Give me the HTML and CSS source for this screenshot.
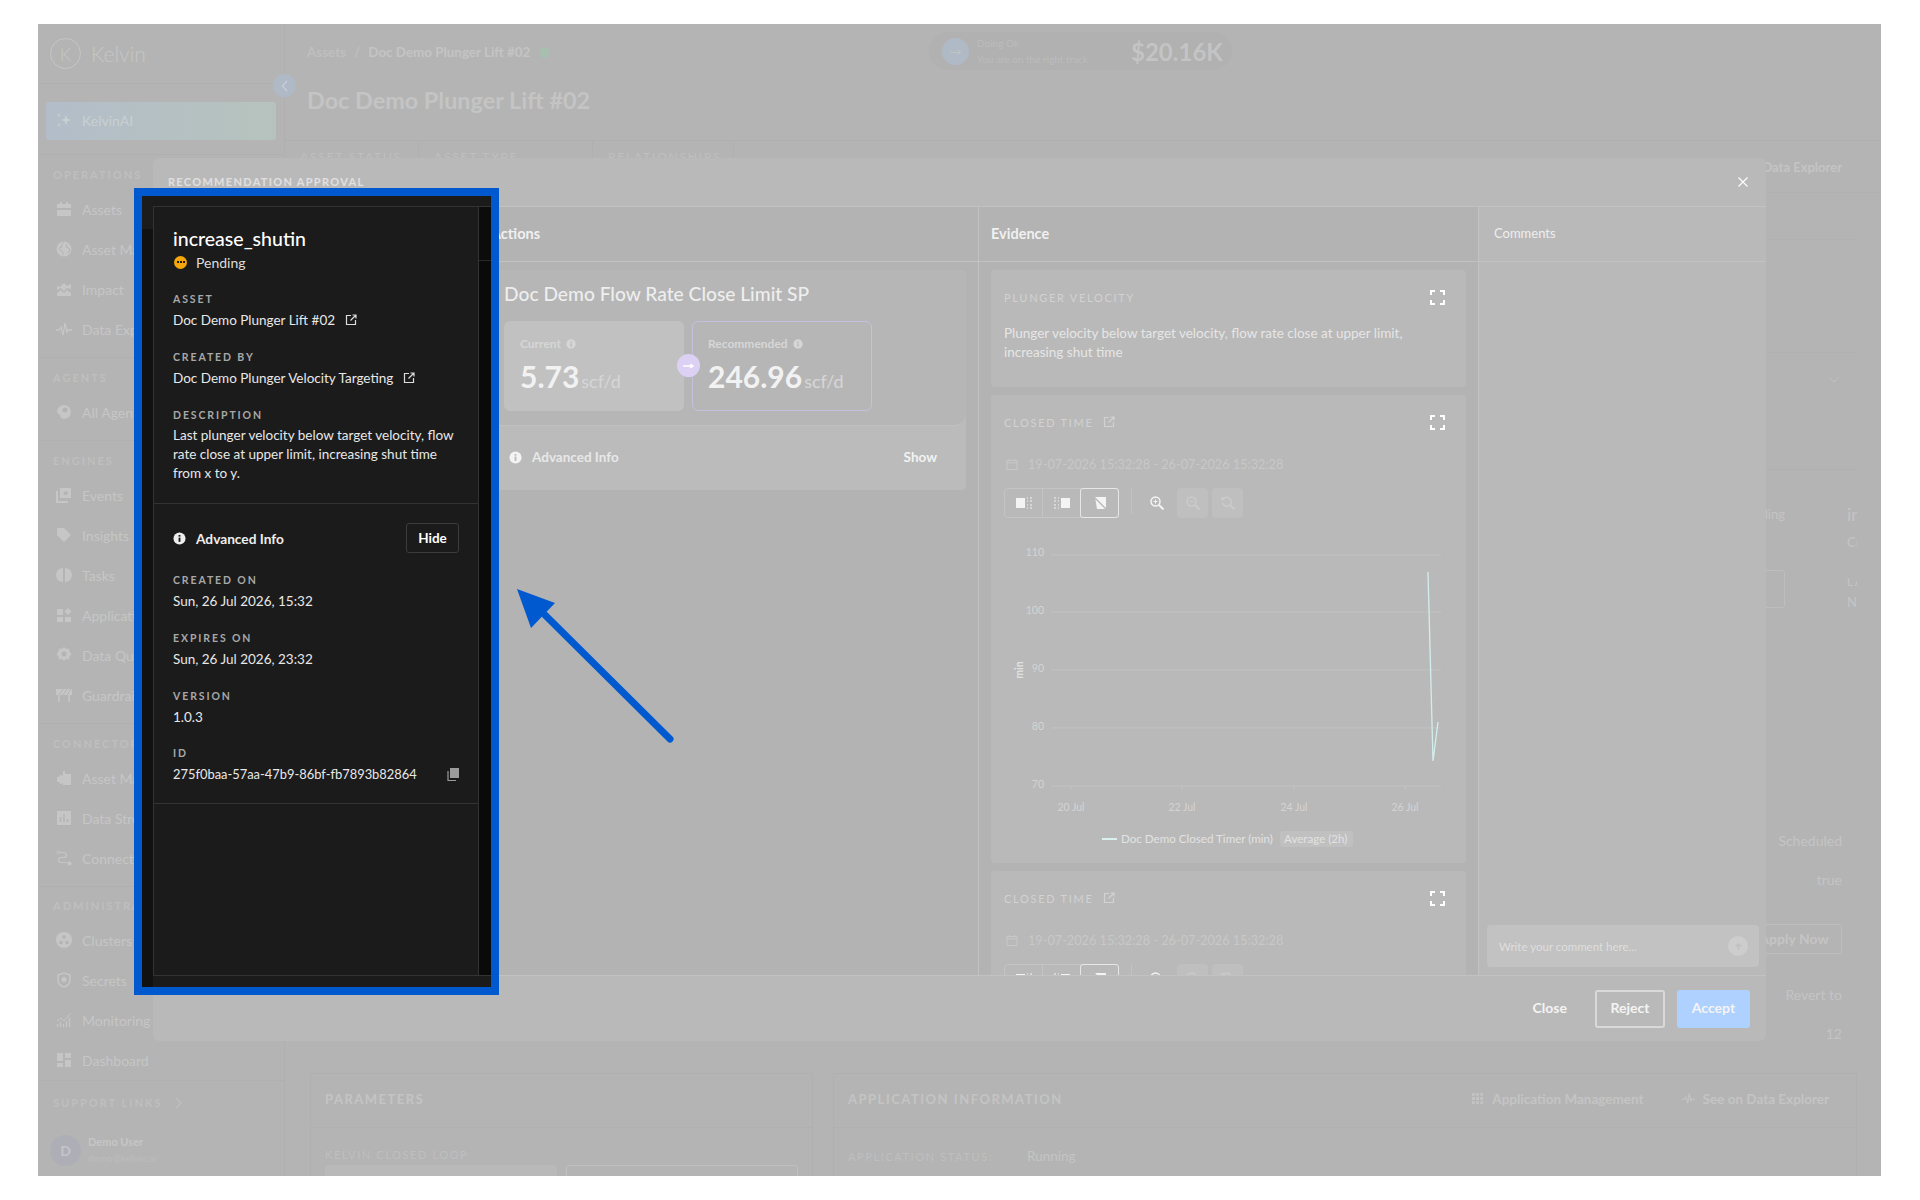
FILE: index.html
```html
<!DOCTYPE html>
<html lang="en">

<head>
    <meta charset="UTF-8">
    <title>Recommendation Approval</title>
    <link rel="stylesheet" href="styles.css">
</head>

<body>
    <svg class="sprite" width="0" height="0">
        <symbol id="external" viewBox="0 0 12 12"><path d="M6 1.5H1.5v9h9V6M5.5 6.5l5-5M7.5 1h3.5v3.5" fill="none" stroke="currentColor" stroke-width="1.2"/></symbol>
        <symbol id="info" viewBox="0 0 14 14"><circle cx="7" cy="7" r="6.5" fill="currentColor"/><rect x="6" y="6" width="2" height="4.6" fill="var(--infoDot)"/><rect x="6" y="3.2" width="2" height="1.8" fill="var(--infoDot)"/></symbol>
        <symbol id="expand" viewBox="0 0 15 15"><path d="M1 5V1h4M10 1h4v4M14 10v4h-4M5 14H1v-4" fill="none" stroke="currentColor" stroke-width="2"/></symbol>
        <symbol id="calendar" viewBox="0 0 12 12"><path d="M1 2.5h10v9H1zM1 4.8h10M3.5 1v2M8.5 1v2" fill="none" stroke="currentColor"/></symbol>
        <symbol id="selLeft" viewBox="0 0 16 12"><path d="M0 1h9v10H0z" fill="currentColor"/><path d="M11 1h1M14 1h2M11 4h1M14 4h2M11 8h1M14 8h2M11 11h1M14 11h2" stroke="currentColor"/></symbol>
        <symbol id="selRight" viewBox="0 0 16 12"><path d="M7 1h9v10H7z" fill="currentColor"/><path d="M0 1h2M4 1h1M0 4h2M4 4h1M0 8h2M4 8h1M0 11h2M4 11h1" stroke="currentColor"/></symbol>
        <symbol id="selNone" viewBox="0 0 12 12"><path d="M1 0h11v12H3z" fill="currentColor"/><path d="M0 0l12 12" stroke="#b9b9b9" stroke-width="1.4"/></symbol>
        <symbol id="zoomIn" viewBox="0 0 14 14"><circle cx="5.5" cy="5.5" r="4.5" fill="none" stroke="currentColor" stroke-width="1.5"/><path d="M9 9l4.5 4.5" stroke="currentColor" stroke-width="2"/><path d="M3.5 5.5h4M5.5 3.5v4" stroke="currentColor"/></symbol>
        <symbol id="zoomOut" viewBox="0 0 14 14"><circle cx="5.5" cy="5.5" r="4.5" fill="none" stroke="currentColor" stroke-width="1.5"/><path d="M9 9l4.5 4.5" stroke="currentColor" stroke-width="2"/><path d="M3.5 5.5h4" stroke="currentColor"/></symbol>
        <symbol id="zoomReset" viewBox="0 0 14 14"><path d="M2 3.5A4.5 4.5 0 1 1 1.5 7" fill="none" stroke="currentColor" stroke-width="1.5"/><path d="M0 1l4 .5L1 5z" fill="currentColor"/><path d="M9 9l4.5 4.5" stroke="currentColor" stroke-width="2"/></symbol>
        <symbol id="assets" viewBox="0 0 16 16"><path d="M4 1h2v2h4V1h2v2h3v4H1V3h3zM1 9h14v6H1z" fill="currentColor"/></symbol>
        <symbol id="globe" viewBox="0 0 16 16"><circle cx="8" cy="8" r="7.5" fill="currentColor"/><path d="M8 1L5 4l1 2-3 1 2 3 2 1v3M11 3l-1 3 3 1 1 3-3 2" fill="none" stroke="#b4b4b4"/></symbol>
        <symbol id="impact" viewBox="0 0 16 16"><path d="M1 15v-3l4-3 3 3 3-3 4 3v3zM1 9V5l3 1 4-4 3 3 4-2v5l-4-1-3 3-3-3z" fill="currentColor"/></symbol>
        <symbol id="pulse" viewBox="0 0 16 16"><path d="M0 9h3l2-3 2 8 2-12 2 9 1-2h4" fill="none" stroke="currentColor" stroke-width="1.3"/></symbol>
        <symbol id="agents" viewBox="0 0 16 16"><path d="M8 1a7 7 0 0 1 7 7 7 7 0 0 1-7 7l-3-1-1-3A7 7 0 0 1 1 8a7 7 0 0 1 7-7z" fill="currentColor"/><circle cx="9" cy="6" r="2.5" fill="#b4b4b4"/></symbol>
        <symbol id="events" viewBox="0 0 16 16"><path d="M4 1h11v10H4z" fill="currentColor"/><path d="M1 4v11h11" fill="none" stroke="currentColor" stroke-width="2"/><path d="M9.5 3l1 2h2L11 6.500l.5 2-2-1-2 1 .5-2L7 5h2z" fill="#b4b4b4"/></symbol>
        <symbol id="tag" viewBox="0 0 16 16"><path d="M1 1h7l7 7-7 7-7-7z" fill="currentColor"/></symbol>
        <symbol id="tasks" viewBox="0 0 16 16"><path d="M7 1v14a7 7 0 0 1 0-14zM9 1a7 7 0 0 1 0 14z" fill="currentColor"/></symbol>
        <symbol id="apps" viewBox="0 0 16 16"><path d="M1 2h6v6H1zM1 10h6v5H1zM9 10h6v5H9zM12 1l3.500 3.500L12 8 8.500 4.500z" fill="currentColor"/></symbol>
        <symbol id="quality" viewBox="0 0 16 16"><path d="M8 0l2 2 3-.500.500 3 2 2.500-2 2.500-.500 3-3-.500-2 2-2-2-3 .500-.500-3L.500 7l2-2.500.500-3 3 .500z" fill="currentColor"/><circle cx="8" cy="7" r="2.500" fill="#b4b4b4"/></symbol>
        <symbol id="guard" viewBox="0 0 16 16"><path d="M0 2h16v6H0z" fill="currentColor"/><path d="M3 8L7 2M7 8l4-6M11 8l4-6" stroke="#b4b4b4"/><path d="M3 8v7M13 8v7" stroke="currentColor" stroke-width="1.600"/></symbol>
        <symbol id="puzzle" viewBox="0 0 16 16"><path d="M7 1h2v3h6v11H7v-3a2 2 0 0 1-4 0H1V7h2a2 2 0 0 1 4 0z" fill="currentColor"/></symbol>
        <symbol id="bars" viewBox="0 0 16 16"><path d="M1 1h14v14H1z" fill="currentColor"/><path d="M4.500 12V7M8 12V4M11.500 12V9" stroke="#b4b4b4" stroke-width="1.500"/></symbol>
        <symbol id="connect" viewBox="0 0 16 16"><circle cx="2.500" cy="2.500" r="1.500" fill="none" stroke="currentColor"/><circle cx="13.500" cy="13.500" r="2" fill="currentColor"/><path d="M4 2.500h4a2.500 2.500 0 0 1 0 5H5a2.500 2.500 0 0 0 0 5h6.500" fill="none" stroke="currentColor" stroke-width="1.200"/></symbol>
        <symbol id="clusters" viewBox="0 0 16 16"><circle cx="8" cy="8" r="8" fill="currentColor"/><circle cx="8" cy="5" r="1.800" fill="#b4b4b4"/><circle cx="5" cy="10.500" r="1.800" fill="#b4b4b4"/><circle cx="11" cy="10.500" r="1.800" fill="#b4b4b4"/></symbol>
        <symbol id="shield" viewBox="0 0 16 16"><path d="M8 1l6 2v5c0 3.500-3 6-6 7-3-1-6-3.500-6-7V3z" fill="none" stroke="currentColor" stroke-width="1.500"/><circle cx="8" cy="7.500" r="2.500" fill="currentColor"/></symbol>
        <symbol id="monitor" viewBox="0 0 16 16"><path d="M1 9l4-3 3 3 7-8" fill="none" stroke="currentColor"/><path d="M1.500 15v-3M4.500 15v-5M7.500 15v-3M10.500 15v-6M13.500 15V6" stroke="currentColor" stroke-width="1.300"/></symbol>
        <symbol id="dashboard" viewBox="0 0 16 16"><path d="M1 1h6v8H1zM9 1h6v5H9zM1 11h6v4H1zM9 8h6v7H9z" fill="currentColor"/></symbol>
        <symbol id="dots" viewBox="0 0 14 14"><path d="M1 1h3v3H1zM5.500 1h3v3h-3zM10 1h3v3h-3zM1 5.500h3v3H1zM5.500 5.500h3v3h-3zM10 5.500h3v3h-3zM1 10h3v3H1zM5.500 10h3v3h-3zM10 10h3v3h-3z" fill="currentColor"/></symbol>
    </svg>

    <div class="shot">
        <aside class="sidebar">
            <div class="logoRow">
                <span class="logoMark">K</span>
                <span class="logoText">Kelvin</span>
            </div>
            <div class="aiBlock">
                <div class="aiButton">
                    <svg class="navIcon" viewBox="0 0 16 16"><path d="M10 3l1.300 3.700L15 8l-3.700 1.300L10 13 8.700 9.300 5 8l3.700-1.300zM3 1l.6 1.400L5 3l-1.400.6L3 5l-.6-1.400L1 3l1.400-.6zM3 11l.6 1.400L5 13l-1.400.6L3 15l-.6-1.400L1 13l1.400-.6z" fill="currentColor"/></svg>
                    KelvinAI
                </div>
            </div>
            <section class="navSection">
                <div class="navLabel">OPERATIONS</div>
                <div class="navItem"><svg class="navIcon"><use href="#assets"/></svg>Assets</div>
                <div class="navItem"><svg class="navIcon"><use href="#globe"/></svg>Asset Map</div>
                <div class="navItem"><svg class="navIcon"><use href="#impact"/></svg>Impact</div>
                <div class="navItem"><svg class="navIcon"><use href="#pulse"/></svg>Data Explorer</div>
            </section>
            <section class="navSection">
                <div class="navLabel">AGENTS</div>
                <div class="navItem"><svg class="navIcon"><use href="#agents"/></svg>All Agents</div>
            </section>
            <section class="navSection">
                <div class="navLabel">ENGINES</div>
                <div class="navItem"><svg class="navIcon"><use href="#events"/></svg>Events</div>
                <div class="navItem"><svg class="navIcon"><use href="#tag"/></svg>Insights</div>
                <div class="navItem"><svg class="navIcon"><use href="#tasks"/></svg>Tasks</div>
                <div class="navItem"><svg class="navIcon"><use href="#apps"/></svg>Applications</div>
                <div class="navItem"><svg class="navIcon"><use href="#quality"/></svg>Data Quality</div>
                <div class="navItem"><svg class="navIcon"><use href="#guard"/></svg>Guardrails</div>
            </section>
            <section class="navSection">
                <div class="navLabel">CONNECTORS</div>
                <div class="navItem"><svg class="navIcon"><use href="#puzzle"/></svg>Asset Management</div>
                <div class="navItem"><svg class="navIcon"><use href="#bars"/></svg>Data Streams</div>
                <div class="navItem"><svg class="navIcon"><use href="#connect"/></svg>Connections</div>
            </section>
            <section class="navSection navSectionLast">
                <div class="navLabel">ADMINISTRATION</div>
                <div class="navItem"><svg class="navIcon"><use href="#clusters"/></svg>Clusters</div>
                <div class="navItem"><svg class="navIcon"><use href="#shield"/></svg>Secrets</div>
                <div class="navItem"><svg class="navIcon"><use href="#monitor"/></svg>Monitoring</div>
                <div class="navItem"><svg class="navIcon"><use href="#dashboard"/></svg>Dashboard</div>
            </section>
            <div class="supportRow">
                <div class="navLabel">SUPPORT LINKS</div>
                <svg class="supportChevron" viewBox="0 0 8 12"><path d="M2 1l5 5-5 5" fill="none" stroke="currentColor" stroke-width="1.200"/></svg>
            </div>
            <div class="userRow">
                <span class="avatar">D</span>
                <div>
                    <div class="userName">Demo User</div>
                    <div class="userMail">demo@kelvin.ai</div>
                </div>
            </div>
        </aside>
        <span class="collapseBtn">
            <svg viewBox="0 0 8 12" width="8" height="12"><path d="M6 1L1.500 6 6 11" fill="none" stroke="currentColor" stroke-width="1.200"/></svg>
        </span>

        <main class="main">
            <header class="topBar">
                <div>
                    <div class="crumbs">
                        <span class="crumbFaint">Assets</span><span class="crumbFaint crumbSlash">/</span><span>Doc Demo Plunger Lift #02</span>
                        <span class="okDot"></span>
                    </div>
                    <h1 class="pageTitle">Doc Demo Plunger Lift #02</h1>
                </div>
                <div class="statusPill">
                    <span class="statusCircle">→</span>
                    <div class="statusText">
                        <div>Doing Ok</div>
                        <div>You are on the right track</div>
                    </div>
                    <span class="statusMoney">$20.16K</span>
                </div>
            </header>
            <nav class="tabRow">
                <span class="tabCell tabStatus">ASSET STATUS</span>
                <span class="tabCell tabType">ASSET TYPE</span>
                <span class="tabCell tabRel">RELATIONSHIPS</span>
                <span class="tabLink">See on Data Explorer</span>
            </nav>
            <div class="mainBody">
                <div class="rightCol">
                    <div class="rightRow rightRowA"></div>
                    <div class="rightRow rightRowB"></div>
                    <div class="rightRow rightRowC">
                        <svg viewBox="0 0 12 8" width="12" height="8"><path d="M1 1l5 5 5-5" fill="none" stroke="currentColor"/></svg>
                    </div>
                    <div class="rightRow rightRowD">
                        <div class="statCol">
                            <div class="statName">Pending</div>
                            <div class="statBtn">Save</div>
                        </div>
                        <div class="statClip">
                            <div class="statBig">increase_shutin</div>
                            <div class="statSmall">Created</div>
                            <div class="statHead">LAST</div>
                            <div class="statVal">N/A</div>
                        </div>
                    </div>
                    <div class="rightList">
                        <div class="rightText">Scheduled</div>
                        <div class="rightText">true</div>
                        <div class="rightBtn">Apply Now</div>
                        <div class="rightText">Revert to</div>
                        <div class="rightText">12</div>
                    </div>
                </div>
            </div>
            <div class="bottomCards">
                <section class="bottomCard bottomParams">
                    <div class="bottomHead">PARAMETERS</div>
                    <div class="bottomInner">
                        <div class="bottomSmall">KELVIN CLOSED LOOP</div>
                        <div class="paramBoxes">
                            <span class="paramBox"></span>
                            <span class="paramBox paramBoxOn"></span>
                        </div>
                    </div>
                </section>
                <section class="bottomCard bottomInfo">
                    <div class="bottomHead bottomHeadWide">
                        <span>APPLICATION INFORMATION</span>
                        <span class="bottomLinks">
                            <span class="bottomLink"><svg class="linkIcon"><use href="#dots"/></svg>Application Management</span>
                            <span class="bottomLink"><svg class="linkIcon"><use href="#pulse"/></svg>See on Data Explorer</span>
                        </span>
                    </div>
                    <div class="bottomInner infoRow">
                        <span class="bottomSmall infoKey">APPLICATION STATUS:</span>
                        <span class="infoVal">Running</span>
                    </div>
                </section>
            </div>
        </main>

        <div class="modal">
            <div class="modalHead">
                <span class="modalTitle">RECOMMENDATION APPROVAL</span>
                <svg class="modalClose" viewBox="0 0 10 10"><path d="M.5.5l9 9M9.500.5l-9 9" stroke="currentColor" stroke-width="1.100"/></svg>
            </div>
            <div class="modalCols">
                <div class="modalCol colBlank"></div>
                <div class="modalCol colShade">
                    <div class="colHead colHeadStrong">Actions</div>
                    <div class="colBody">
                        <div class="actionCard">
                            <div class="actionTop">
                                <div class="actionTitle">Doc Demo Flow Rate Close Limit SP</div>
                                <div class="valueRow">
                                    <div class="valueBox valueCurrent">
                                        <div class="valueLabel">Current <svg class="tinyInfo"><use href="#info"/></svg></div>
                                        <div class="valueNum">5.73<span class="valueUnit">scf/d</span></div>
                                    </div>
                                    <div class="valueBox valueRec">
                                        <div class="valueLabel">Recommended <svg class="tinyInfo"><use href="#info"/></svg></div>
                                        <div class="valueNum">246.96<span class="valueUnit">scf/d</span></div>
                                    </div>
                                    <span class="valueArrow">
                                        <svg viewBox="0 0 12 8" width="11" height="8"><path d="M0 4h10M8 2l3 2-3 2" fill="none" stroke="currentColor" stroke-width="1.500"/></svg>
                                    </span>
                                </div>
                            </div>
                            <div class="actionInfo">
                                <span class="infoLeft"><svg class="smallInfo"><use href="#info"/></svg>Advanced Info</span>
                                <span class="showLink">Show</span>
                            </div>
                        </div>
                    </div>
                </div>
                <div class="modalCol colShade">
                    <div class="colHead colHeadStrong">Evidence</div>
                    <div class="colBody colBodyEvidence">
                        <section class="evCard evCardText">
                            <div class="evHead">
                                <span class="evTitle">PLUNGER VELOCITY</span>
                                <svg class="expandIcon"><use href="#expand"/></svg>
                            </div>
                            <p class="evText">Plunger velocity below target velocity, flow rate close at upper limit, increasing shut time</p>
                        </section>
                        <section class="evCard">
                            <div class="evHead">
                                <span class="evTitle">CLOSED TIME<svg class="evExternal"><use href="#external"/></svg></span>
                                <svg class="expandIcon"><use href="#expand"/></svg>
                            </div>
                            <div class="dateRow"><svg class="calIcon"><use href="#calendar"/></svg>19-07-2026 15:32:28 - 26-07-2026 15:32:28</div>
                            <div class="toolRow">
                                <div class="toolGroup">
                                    <span class="toolBtn"><svg class="toolIcon"><use href="#selLeft"/></svg></span>
                                    <span class="toolBtn"><svg class="toolIcon"><use href="#selRight"/></svg></span>
                                    <span class="toolBtn toolBtnOn"><svg class="toolIcon toolIconNarrow"><use href="#selNone"/></svg></span>
                                </div>
                                <span class="toolSep"></span>
                                <span class="zoomBtn zoomMain"><svg class="zoomIcon"><use href="#zoomIn"/></svg></span>
                                <span class="zoomBtn zoomOff"><svg class="zoomIcon"><use href="#zoomOut"/></svg></span>
                                <span class="zoomBtn zoomOff"><svg class="zoomIcon"><use href="#zoomReset"/></svg></span>
                            </div>
                            <svg class="chart" viewBox="0 0 474 344" width="474" height="344">
                                <g class="chartGrid">
                                    <path d="M60 36h390M60 93h390M60 151h390M60 209h390M60 267h390M80 267v4M191 267v4M303 267v4M414 267v4"/>
                                </g>
                                <g class="chartTick" text-anchor="end">
                                    <text x="53" y="37">110</text>
                                    <text x="53" y="95">100</text>
                                    <text x="53" y="153">90</text>
                                    <text x="53" y="211">80</text>
                                    <text x="53" y="269">70</text>
                                </g>
                                <g class="chartTick" text-anchor="middle">
                                    <text x="80" y="292">20 Jul</text>
                                    <text x="191" y="292">22 Jul</text>
                                    <text x="303" y="292">24 Jul</text>
                                    <text x="414" y="292">26 Jul</text>
                                </g>
                                <text class="chartUnit" transform="translate(32 151) rotate(-90)" text-anchor="middle">min</text>
                                <path class="chartLine" d="M437 53L442 242L447 203"/>
                                <path class="legendLine" d="M111 320h15"/>
                                <text class="chartLegend" x="130" y="324">Doc Demo Closed Timer (min)</text>
                                <rect class="legendChip" x="289" y="312" width="73" height="16" rx="3"/>
                                <text class="chartLegend" x="293" y="324">Average (2h)</text>
                            </svg>
                        </section>
                        <section class="evCard">
                            <div class="evHead">
                                <span class="evTitle">CLOSED TIME<svg class="evExternal"><use href="#external"/></svg></span>
                                <svg class="expandIcon"><use href="#expand"/></svg>
                            </div>
                            <div class="dateRow"><svg class="calIcon"><use href="#calendar"/></svg>19-07-2026 15:32:28 - 26-07-2026 15:32:28</div>
                            <div class="toolRow">
                                <div class="toolGroup">
                                    <span class="toolBtn"><svg class="toolIcon"><use href="#selLeft"/></svg></span>
                                    <span class="toolBtn"><svg class="toolIcon"><use href="#selRight"/></svg></span>
                                    <span class="toolBtn toolBtnOn"><svg class="toolIcon toolIconNarrow"><use href="#selNone"/></svg></span>
                                </div>
                                <span class="toolSep"></span>
                                <span class="zoomBtn zoomMain"><svg class="zoomIcon"><use href="#zoomIn"/></svg></span>
                                <span class="zoomBtn zoomOff"><svg class="zoomIcon"><use href="#zoomOut"/></svg></span>
                                <span class="zoomBtn zoomOff"><svg class="zoomIcon"><use href="#zoomReset"/></svg></span>
                            </div>
                        </section>
                    </div>
                </div>
                <div class="modalCol">
                    <div class="colHead">Comments</div>
                    <div class="commentBody">
                        <div class="commentInput">
                            <span>Write your comment here...</span>
                            <span class="sendBtn">
                                <svg viewBox="0 0 10 10" width="9" height="9"><path d="M5 9V2M2 5l3-3 3 3" fill="none" stroke="currentColor" stroke-width="1.500"/></svg>
                            </span>
                        </div>
                    </div>
                </div>
            </div>
            <div class="modalFoot">
                <span class="footClose">Close</span>
                <span class="footBtn footReject">Reject</span>
                <span class="footBtn footAccept">Accept</span>
            </div>
        </div>

        <div class="spot">
            <div class="spotLeft"></div>
            <div class="spotTop"></div>
            <div class="detail">
                <div class="detailHead">
                    <div class="detailName">increase_shutin</div>
                    <div class="detailStatus">
                        <span class="pendingDot"><i></i><i></i><i></i></span>Pending
                    </div>
                    <div class="field">
                        <div class="fieldLabel">ASSET</div>
                        <div class="fieldValue">Doc Demo Plunger Lift #02<svg class="fieldExternal"><use href="#external"/></svg></div>
                    </div>
                    <div class="field">
                        <div class="fieldLabel">CREATED BY</div>
                        <div class="fieldValue">Doc Demo Plunger Velocity Targeting<svg class="fieldExternal"><use href="#external"/></svg></div>
                    </div>
                    <div class="field">
                        <div class="fieldLabel">DESCRIPTION</div>
                        <div class="fieldText">Last plunger velocity below target velocity, flow rate close at upper limit, increasing shut time from x to y.</div>
                    </div>
                </div>
                <div class="detailMore">
                    <div class="moreHead">
                        <span class="moreTitle"><svg class="moreInfo"><use href="#info"/></svg>Advanced Info</span>
                        <span class="hideBtn">Hide</span>
                    </div>
                    <div class="field">
                        <div class="fieldLabel">CREATED ON</div>
                        <div class="fieldValue">Sun, 26 Jul 2026, 15:32</div>
                    </div>
                    <div class="field">
                        <div class="fieldLabel">EXPIRES ON</div>
                        <div class="fieldValue">Sun, 26 Jul 2026, 23:32</div>
                    </div>
                    <div class="field">
                        <div class="fieldLabel">VERSION</div>
                        <div class="fieldValue">1.0.3</div>
                    </div>
                    <div class="field fieldLast">
                        <div class="fieldLabel">ID</div>
                        <div class="fieldValue fieldValueId">
                            275f0baa-57aa-47b9-86bf-fb7893b82864
                            <svg class="copyIcon" viewBox="0 0 12 13"><path d="M3 0h9v10H3z" fill="currentColor"/><path d="M1 3v9.500h8" fill="none" stroke="currentColor" stroke-width="1.200"/></svg>
                        </div>
                    </div>
                </div>
            </div>
            <div class="spotRight"></div>
            <div class="spotBottom"></div>
        </div>

        <svg class="pointer" viewBox="0 0 180 180" width="180" height="180">
            <path d="M151 149L26 25" stroke="#0059cf" stroke-width="7" stroke-linecap="round"/>
            <path d="M-2 -1L36 13L12 38z" fill="#0059cf"/>
        </svg>
    </div>
</body>

</html>
```

FILE: styles.css
```css
* {
    margin: 0;
    padding: 0;
    box-sizing: border-box;
}

body {
    background: #fff;
    font-family: "Lato", "Liberation Sans", sans-serif;
    font-size: 13.5px;
    color: #eee;
    padding: 24px 39px 24px 38px;
    --infoDot: #b9b9b9;
}

.sprite {
    position: absolute;
}

.shot {
    position: relative;
    display: flex;
    height: 1152px;
    background: #b4b4b4;
    overflow: hidden;
}

/* sidebar */
.sidebar {
    width: 247px;
    flex: none;
    border-right: 1px solid #b0b0b0;
    color: #c6c6c6;
}

.logoRow {
    height: 60px;
    display: flex;
    align-items: center;
    gap: 10px;
    padding-left: 12px;
    border-bottom: 1px solid #b0b0b0;
}

.logoMark {
    width: 31px;
    height: 31px;
    border: 1px solid #c6c6c6;
    border-radius: 50%;
    display: flex;
    align-items: center;
    justify-content: center;
    font-size: 18px;
    font-weight: 300;
}

.logoText {
    font-size: 21px;
    font-weight: 300;
}

.aiBlock {
    height: 71px;
    padding: 18px 8px 0;
    border-bottom: 1px solid #b0b0b0;
}

.aiButton {
    height: 38px;
    border-radius: 3px;
    background: linear-gradient(90deg, #b3bdc9, #b6c3bd);
    display: flex;
    align-items: center;
    gap: 10px;
    padding: 0 0 2px 10px;
    font-size: 14px;
    color: #c9d0d3;
}

.navSection {
    padding: 10px 8px 8px;
    border-bottom: 1px solid #b0b0b0;
}

.navSectionLast {
    padding: 9px 8px 0;
}

.navLabel {
    height: 20px;
    line-height: 20px;
    padding-left: 7px;
    margin-bottom: 4px;
    font-size: 11px;
    font-weight: 700;
    letter-spacing: 2px;
    color: #bfbfbf;
}

.navItem {
    height: 40px;
    display: flex;
    align-items: center;
    gap: 10px;
    padding-left: 10px;
    font-size: 14px;
    white-space: nowrap;
}

.navIcon {
    width: 16px;
    height: 16px;
    flex: none;
}

.supportRow {
    display: flex;
    align-items: flex-start;
    gap: 11px;
    padding: 12px 8px 0;
    color: #bfbfbf;
}

.supportChevron {
    width: 8px;
    height: 12px;
    margin-top: 4px;
}

.userRow {
    display: flex;
    align-items: center;
    gap: 7px;
    padding: 17px 0 0 12px;
}

.avatar {
    width: 31px;
    height: 31px;
    border-radius: 50%;
    background: #aeaeb6;
    color: #c4c4cc;
    display: flex;
    align-items: center;
    justify-content: center;
    font-weight: 700;
    font-size: 14px;
}

.userName {
    font-size: 11px;
    font-weight: 700;
    line-height: 16px;
}

.userMail {
    font-size: 10px;
    line-height: 16px;
    color: #bdbdbd;
}

.collapseBtn {
    position: absolute;
    left: 235px;
    top: 50px;
    width: 23px;
    height: 23px;
    border-radius: 50%;
    background: #b0b9c6;
    color: #c5cdd8;
    display: flex;
    align-items: center;
    justify-content: center;
}

/* page behind the modal */
.main {
    flex: 1;
    min-width: 0;
    color: #c4c4c4;
}

.topBar {
    height: 116px;
    display: flex;
    gap: 322px;
    padding: 8px 0 0 22px;
}

.crumbs {
    display: flex;
    align-items: center;
    height: 40px;
    gap: 6px;
    font-size: 13.4px;
    font-weight: 700;
}

.crumbFaint {
    color: #bfbfbf;
}

.crumbSlash {
    margin: 0 2px;
}

.okDot {
    width: 11px;
    height: 11px;
    border-radius: 50%;
    background: #a8bfb0;
    margin-left: 3px;
}

.pageTitle {
    font-size: 23.4px;
    font-weight: 700;
    line-height: 32px;
    margin-top: 12px;
    width: 300px;
    white-space: nowrap;
}

.statusPill {
    width: 303px;
    height: 38px;
    border-radius: 19px;
    background: #b1b1b1;
    display: flex;
    align-items: center;
    gap: 8px;
    padding-left: 13px;
}

.statusCircle {
    width: 27px;
    height: 27px;
    border-radius: 50%;
    background: #b0b9c6;
    display: flex;
    align-items: center;
    justify-content: center;
    font-size: 12px;
}

.statusText {
    width: 146px;
    font-size: 10px;
    line-height: 16px;
    color: #bcbcbc;
    white-space: nowrap;
}

.statusMoney {
    font-size: 24px;
    font-weight: 700;
}

.tabRow {
    height: 53px;
    display: flex;
    border-top: 1px solid #b0b0b0;
    border-bottom: 1px solid #b0b0b0;
}

.tabCell {
    padding: 8px 0 0 15px;
    font-size: 12px;
    letter-spacing: 1.8px;
    color: #bfbfbf;
    border-right: 1px solid #b0b0b0;
    white-space: nowrap;
}

.tabStatus {
    width: 134px;
}

.tabType {
    width: 174px;
}

.tabRel {
    width: 141px;
}

.tabLink {
    margin-left: auto;
    padding: 18px 39px 0 0;
    font-size: 13px;
    font-weight: 700;
}

.mainBody {
    height: 880px;
    display: flex;
    justify-content: flex-end;
    padding-right: 24px;
}

.rightCol {
    width: 400px;
}

.rightRow {
    border-bottom: 1px solid #b0b0b0;
}

.rightRowA {
    height: 47px;
}

.rightRowB {
    height: 113px;
}

.rightRowC {
    height: 117px;
    display: flex;
    justify-content: flex-end;
    padding: 23px 17px 0 0;
    color: #c0c0c0;
}

.rightRowD {
    height: 156px;
    display: flex;
    justify-content: flex-end;
    border-bottom: none;
    gap: 62px;
}

.statCol {
    display: flex;
    flex-direction: column;
    align-items: flex-end;
    padding-top: 34px;
}

.statName {
    font-size: 13px;
    line-height: 20px;
}

.statBtn {
    margin-top: 46px;
    width: 80px;
    height: 38px;
    border: 1px solid #bebebe;
    border-radius: 3px;
    line-height: 36px;
    text-align: center;
}

.statClip {
    width: 10px;
    overflow: hidden;
    white-space: nowrap;
    padding-top: 24px;
}

.statBig {
    font-size: 18px;
    line-height: 40px;
}

.statSmall {
    font-size: 13px;
    line-height: 16px;
}

.statHead {
    font-size: 11px;
    letter-spacing: 2px;
    line-height: 20px;
    margin-top: 22px;
}

.statVal {
    font-size: 13px;
    line-height: 20px;
}

.rightList {
    display: flex;
    flex-direction: column;
    align-items: flex-end;
    padding: 195px 15px 0 0;
    font-size: 14px;
}

.rightText {
    height: 39px;
    line-height: 39px;
}

.rightBtn {
    width: 96px;
    height: 30px;
    margin: 25px 0 21px;
    border: 1px solid #bebebe;
    border-radius: 3px;
    line-height: 28px;
    text-align: center;
    font-weight: 700;
}

.bottomCards {
    display: flex;
    gap: 20px;
    padding: 0 24px 0 25px;
}

.bottomCard {
    height: 110px;
    border: 1px solid #b0b0b0;
    border-bottom: none;
}

.bottomParams {
    width: 503px;
    flex: none;
}

.bottomInfo {
    flex: 1;
}

.bottomHead {
    height: 54px;
    display: flex;
    align-items: center;
    justify-content: space-between;
    padding: 0 14px 4px;
    font-size: 13px;
    font-weight: 700;
    letter-spacing: 1.5px;
    border-bottom: 1px solid #b0b0b0;
}

.bottomHeadWide {
    padding-right: 27px;
}

.bottomLinks {
    display: flex;
    gap: 38px;
    letter-spacing: 0;
    font-size: 13.5px;
}

.bottomLink {
    display: flex;
    align-items: center;
    gap: 8px;
}

.linkIcon {
    width: 13px;
    height: 13px;
}

.bottomInner {
    padding: 17px 14px 0;
}

.bottomSmall {
    font-size: 11px;
    letter-spacing: 1.6px;
    line-height: 20px;
    color: #bfbfbf;
}

.paramBoxes {
    display: flex;
    gap: 9px;
}

.paramBox {
    width: 232px;
    height: 20px;
    background: #b9b9b9;
    border-radius: 3px;
}

.paramBoxOn {
    background: none;
    border: 1px solid #c0c0c0;
}

.infoRow {
    display: flex;
}

.infoKey {
    width: 179px;
    padding-top: 2px;
}

.infoVal {
    padding-top: 3px;
}

/* modal */
.modal {
    position: absolute;
    left: 115px;
    top: 134px;
    width: 1613px;
    height: 883px;
    background: #b9b9b9;
    border-radius: 6px;
    display: flex;
    flex-direction: column;
}

.modalHead {
    height: 49px;
    flex: none;
    display: flex;
    justify-content: space-between;
    align-items: center;
    padding: 0 18px 1px 15px;
    border-bottom: 1px solid #c2c2c2;
}

.modalTitle {
    font-size: 11px;
    font-weight: 700;
    letter-spacing: 1.3px;
    color: #e0e0e0;
}

.modalClose {
    width: 10px;
    height: 10px;
    color: #fff;
}

.modalCols {
    height: 768px;
    flex: none;
    display: flex;
    overflow: hidden;
}

.modalCol {
    flex: none;
    width: 288px;
    display: flex;
    flex-direction: column;
    border-right: 1px solid #c2c2c2;
}

.modalCol:last-child {
    border-right: none;
}

.colBlank {
    width: 326px;
}

.colShade {
    width: 500px;
    background: #b3b3b3;
}

.colHead {
    height: 55px;
    flex: none;
    display: flex;
    align-items: center;
    padding: 0 0 2px 15px;
    border-bottom: 1px solid #c2c2c2;
    font-size: 13px;
    color: #eee;
}

.colHeadStrong {
    padding-left: 12px;
    font-weight: 700;
    font-size: 14.5px;
    color: #f0f0f0;
}

.colBody {
    padding: 8px 12px;
    min-height: 0;
    flex: 1;
}

.colBodyEvidence {
    display: flex;
    flex-direction: column;
    gap: 8px;
    overflow: hidden;
}

.actionCard {
    background: #bbbbbb;
    border-radius: 4px;
    height: 220px;
}

.actionTop {
    height: 156px;
    padding: 12px 13px 0;
    background: #b6b6b6;
    border-radius: 4px 4px 12px 12px;
    border-bottom: 1px solid #c0c0c0;
}

.actionTitle {
    font-size: 19.2px;
    line-height: 24px;
    font-weight: 500;
    color: #eee;
}

.valueRow {
    position: relative;
    display: flex;
    gap: 8px;
    margin-top: 15px;
}

.valueBox {
    width: 180px;
    height: 90px;
    border-radius: 6px;
    padding: 15px 16px 0;
}

.valueCurrent {
    background: #c1c1c1;
}

.valueRec {
    border: 1px solid #c6c0de;
    padding: 14px 15px 0;
}

.valueLabel {
    display: flex;
    align-items: center;
    gap: 5px;
    font-size: 12px;
    font-weight: 700;
    line-height: 16px;
    color: #d6d6d6;
}

.tinyInfo {
    width: 10px;
    height: 10px;
    color: #d6d6d6;
}

.valueNum {
    font-size: 30px;
    font-weight: 700;
    line-height: 40px;
    margin-top: 4px;
    color: #f2f2f2;
}

.valueUnit {
    font-size: 18px;
    font-weight: 400;
    margin-left: 2px;
    color: #d6d6d6;
}

.valueArrow {
    position: absolute;
    left: 173px;
    top: 33px;
    width: 23px;
    height: 23px;
    border-radius: 50%;
    background: #dcd0f4;
    color: #fff;
    display: flex;
    align-items: center;
    justify-content: center;
}

.actionInfo {
    height: 62px;
    display: flex;
    align-items: center;
    justify-content: space-between;
    padding: 0 29px 0 18px;
}

.infoLeft {
    display: flex;
    align-items: center;
    gap: 10px;
    font-weight: 700;
    color: #e8e8e8;
}

.smallInfo {
    width: 13px;
    height: 13px;
    color: #f4f4f4;
}

.showLink {
    font-weight: 700;
    color: #f2f2f2;
}

.evCard {
    flex: none;
    background: #b9b9b9;
    border-radius: 4px;
    padding: 17px 13px 0;
}

.evCardText {
    height: 117px;
}

.evHead {
    height: 20px;
    display: flex;
    align-items: center;
    justify-content: space-between;
    padding-right: 8px;
}

.evTitle {
    display: flex;
    align-items: center;
    font-size: 11px;
    letter-spacing: 1.7px;
    color: #d2d2d2;
}

.evExternal {
    width: 12px;
    height: 12px;
    margin-left: 10px;
    color: #d2d2d2;
}

.expandIcon {
    width: 15px;
    height: 15px;
    color: #fff;
}

.evText {
    width: 430px;
    margin-top: 17px;
    line-height: 19px;
    color: #e6e6e6;
}

.dateRow {
    display: flex;
    align-items: center;
    height: 20px;
    margin-top: 22px;
    padding-left: 2px;
    gap: 10px;
    font-size: 12.7px;
    color: #c8c8c8;
}

.calIcon {
    width: 12px;
    height: 12px;
    color: #c8c8c8;
}

.toolRow {
    display: flex;
    align-items: flex-start;
    margin-top: 14px;
    height: 30px;
}

.toolGroup {
    display: flex;
    width: 115px;
    height: 30px;
    border: 1px solid #c4c4c4;
    border-radius: 4px;
}

.toolBtn {
    width: 38px;
    display: flex;
    align-items: center;
    justify-content: center;
    border-right: 1px solid #c4c4c4;
    color: #f4f4f4;
}

.toolBtnOn {
    border: 1px solid #e6e6e6;
    border-radius: 3px;
    margin: -1px;
    width: 39px;
}

.toolIcon {
    width: 16px;
    height: 12px;
}

.toolIconNarrow {
    width: 12px;
}

.toolSep {
    width: 1px;
    height: 26px;
    margin: 0 15px 0 12px;
    background: #c2c2c2;
}

.zoomBtn {
    width: 31px;
    height: 30px;
    margin-right: 4px;
    border-radius: 4px;
    display: flex;
    align-items: center;
    justify-content: center;
    color: #f4f4f4;
}

.zoomMain {
    width: 20px;
    margin-right: 10px;
}

.zoomOff {
    background: #bfbfbf;
    color: #cbcbcb;
}

.zoomIcon {
    width: 14px;
    height: 14px;
}

.chart {
    display: block;
    margin: 1px 0 0 -13px;
}

.chartGrid path {
    stroke: #c2c2c2;
    fill: none;
}

.chartTick text {
    font-size: 10.5px;
    fill: #d4d4d4;
}

.chartUnit {
    font-size: 10.5px;
    font-weight: 700;
    fill: #e2e2e2;
}

.chartLine {
    fill: none;
    stroke: #d3eeec;
    stroke-width: 1.3;
}

.legendLine {
    stroke: #d9f2f0;
    stroke-width: 2;
}

.chartLegend {
    font-size: 11.6px;
    fill: #e2e2e2;
}

.legendChip {
    fill: #c0c0c0;
}

.commentBody {
    flex: 1;
    display: flex;
    align-items: flex-end;
    padding: 0 8px 8px;
}

.commentInput {
    width: 272px;
    height: 42px;
    background: #c2c2c2;
    border-radius: 4px;
    display: flex;
    align-items: center;
    justify-content: space-between;
    padding: 0 11px 0 12px;
    font-size: 11.5px;
    color: #dedede;
}

.sendBtn {
    width: 20px;
    height: 20px;
    border-radius: 50%;
    background: #cdcdcd;
    color: #c0c0c0;
    display: flex;
    align-items: center;
    justify-content: center;
}

.modalFoot {
    flex: 1;
    display: flex;
    align-items: flex-start;
    justify-content: flex-end;
    gap: 12px;
    padding: 14px 16px 0 0;
    border-top: 1px solid #c2c2c2;
    font-size: 14px;
    font-weight: 700;
    color: #f4f4f4;
}

.footClose {
    height: 38px;
    line-height: 36px;
    margin-right: 16px;
}

.footBtn {
    height: 38px;
    line-height: 32px;
    text-align: center;
    border-radius: 3px;
}

.footReject {
    width: 70px;
    border: 2px solid #d9d9d9;
}

.footAccept {
    width: 73px;
    line-height: 36px;
    background: #aed1ff;
}

/* the part of the dark app left uncovered */
.spot {
    position: absolute;
    left: 96px;
    top: 164px;
    width: 365px;
    height: 807px;
    border: 8px solid #0059cf;
    display: grid;
    grid-template-columns: 11px 326px 12px;
    grid-template-rows: 11px 768px 12px;
    background: #1b1b1b;
    --infoDot: #1b1b1b;
}

.spotLeft {
    grid-row: 1 / 4;
    background: linear-gradient(#1c1c1c 33px, #111 33px);
}

.spotTop {
    grid-column: 2 / 4;
    border-bottom: 1px solid #333;
}

.detail {
    display: flex;
    flex-direction: column;
    border: 1px solid #333;
    border-top: none;
    border-bottom: none;
    color: #e8e8e8;
}

.spotRight {
    background: linear-gradient(#0c0c0c 53px, #2a2a2a 53px, #2a2a2a 54px, #0a0a0a 54px);
}

.spotBottom {
    grid-column: 2 / 4;
    border-top: 1px solid #333;
}

.detailHead {
    height: 297px;
    padding: 21px 19px 0;
    border-bottom: 1px solid #333;
}

.detailName {
    font-size: 19.5px;
    line-height: 22px;
    font-weight: 500;
    color: #fff;
}

.detailStatus {
    display: flex;
    align-items: center;
    gap: 9px;
    height: 20px;
    margin-top: 2px;
    padding-left: 1px;
    font-size: 14px;
    color: #ddd;
}

.pendingDot {
    width: 13px;
    height: 13px;
    border-radius: 50%;
    background: #f5a60a;
    display: flex;
    align-items: center;
    justify-content: center;
    gap: 1px;
}

.pendingDot i {
    width: 2px;
    height: 2px;
    background: #1b1b1b;
}

.field {
    margin-top: 19px;
}

.fieldLast {
    margin-top: 18px;
}

.fieldLabel {
    height: 16px;
    line-height: 16px;
    font-size: 10.5px;
    font-weight: 700;
    letter-spacing: 1.9px;
    color: #a8a8a8;
}

.fieldValue {
    display: flex;
    align-items: center;
    height: 20px;
    margin-top: 3px;
    white-space: nowrap;
    color: #e8e8e8;
}

.fieldExternal {
    width: 12px;
    height: 12px;
    margin-left: 10px;
    color: #ddd;
}

.fieldText {
    width: 290px;
    margin-top: 3px;
    line-height: 19px;
    color: #e8e8e8;
}

.detailMore {
    height: 300px;
    padding: 19px 19px 0;
    border-bottom: 1px solid #333;
}

.moreHead {
    display: flex;
    align-items: center;
    justify-content: space-between;
    height: 30px;
}

.moreTitle {
    display: flex;
    align-items: center;
    gap: 10px;
    font-size: 13.7px;
    font-weight: 700;
    color: #eee;
}

.moreInfo {
    width: 13px;
    height: 13px;
    color: #eee;
}

.hideBtn {
    width: 53px;
    height: 30px;
    line-height: 28px;
    text-align: center;
    border: 1px solid #3c3c3c;
    border-radius: 3px;
    font-weight: 700;
    color: #fff;
}

.fieldValueId {
    justify-content: space-between;
    font-size: 12.9px;
}

.copyIcon {
    width: 12px;
    height: 13px;
    color: #9c9c9c;
}

.pointer {
    position: absolute;
    left: 481px;
    top: 566px;
    overflow: visible;
}
```
